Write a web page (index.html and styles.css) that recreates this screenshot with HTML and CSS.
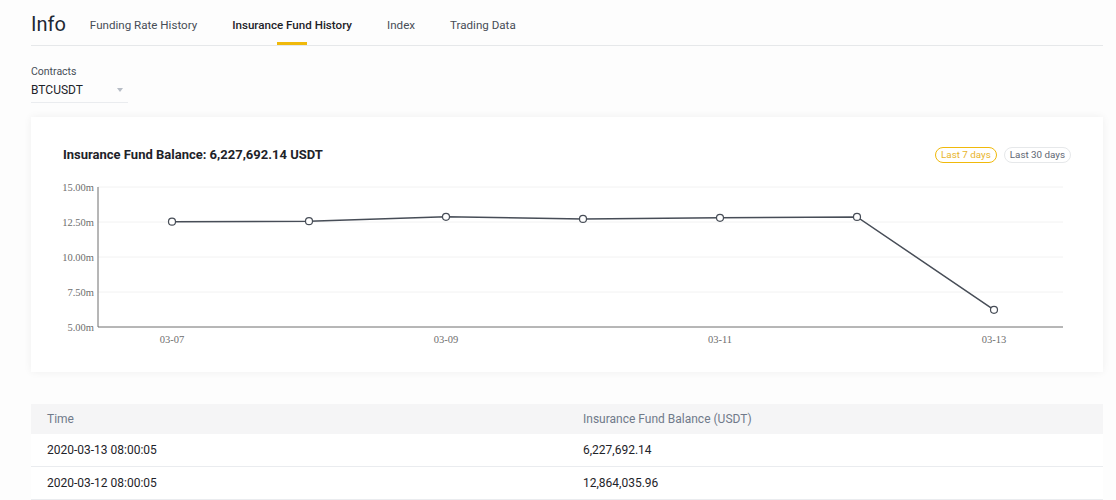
FILE: index.html
```html
<!DOCTYPE html>
<html lang="en">
<head>
    <meta charset="UTF-8">
    <title>Info - Insurance Fund History</title>
    <link rel="stylesheet" href="styles.css">
</head>
<body>
    <div class="page">
        <div class="header">
            <h1 class="title">Info</h1>
            <div class="tabs">
                <a class="tab">Funding Rate History</a>
                <a class="tab active">Insurance Fund History</a>
                <a class="tab">Index</a>
                <a class="tab">Trading Data</a>
            </div>
        </div>

        <div class="contracts">
            <div class="contracts-label">Contracts</div>
            <div class="select">
                <span>BTCUSDT</span>
                <span class="caret"></span>
            </div>
        </div>

        <div class="card">
            <div class="card-head">
                <div class="card-title">Insurance Fund Balance: 6,227,692.14 USDT</div>
                <div class="ranges">
                    <button class="range active">Last 7 days</button>
                    <button class="range">Last 30 days</button>
                </div>
            </div>
            <svg id="chart" class="chart" width="1072" height="172" viewBox="0 0 1072 172"></svg>
        </div>

        <div class="table">
            <div class="row head">
                <div class="cell">Time</div>
                <div class="cell">Insurance Fund Balance (USDT)</div>
            </div>
            <div class="row">
                <div class="cell">2020-03-13 08:00:05</div>
                <div class="cell">6,227,692.14</div>
            </div>
            <div class="row">
                <div class="cell">2020-03-12 08:00:05</div>
                <div class="cell">12,864,035.96</div>
            </div>
        </div>
    </div>

    <script>
        const data = [
            { label: '03-07', value: 12.52 },
            { label: '03-08', value: 12.56 },
            { label: '03-09', value: 12.87 },
            { label: '03-10', value: 12.72 },
            { label: '03-11', value: 12.80 },
            { label: '03-12', value: 12.864 },
            { label: '03-13', value: 6.2277 }
        ];

        const svg = document.getElementById('chart');
        const ns = 'http://www.w3.org/2000/svg';
        const plot = { left: 67, right: 1032, top: 9, bottom: 149 };
        const min = 5, max = 15;

        function el(name, attrs, text) {
            const node = document.createElementNS(ns, name);
            for (const k in attrs) node.setAttribute(k, attrs[k]);
            if (text) node.textContent = text;
            svg.appendChild(node);
            return node;
        }

        function yOf(v) {
            return plot.bottom - (v - min) / (max - min) * (plot.bottom - plot.top);
        }

        // grid + y labels
        for (let v = min; v <= max; v += 2.5) {
            const y = yOf(v);
            if (v > min) el('line', { x1: plot.left, x2: plot.right, y1: y, y2: y, class: 'grid' });
            el('text', { x: 63, y: y + 4, class: 'axis-label', 'text-anchor': 'end' }, v.toFixed(2) + 'm');
        }

        el('line', { x1: plot.left, x2: plot.left, y1: plot.top, y2: plot.bottom, class: 'axis' });
        el('line', { x1: plot.left, x2: plot.right, y1: plot.bottom, y2: plot.bottom, class: 'axis' });

        const pts = data.map((d, i) => [141 + i * 137, yOf(d.value)]);
        el('polyline', { points: pts.map(p => p.join(',')).join(' '), class: 'line' });

        pts.forEach((p, i) => {
            el('circle', { cx: p[0], cy: p[1], r: 3.5, class: 'dot' });
            if (i % 2 === 0) {
                el('text', { x: p[0], y: 165, class: 'axis-label', 'text-anchor': 'middle' }, data[i].label);
            }
        });
    </script>
</body>
</html>
```

FILE: styles.css
```css
body {
    margin: 0;
    background-color: #fdfdfd;
    font-family: Roboto, "Liberation Sans", sans-serif;
    color: #1e2329;
}
.page {
    width: 1072px;
    padding-left: 31px;
}
.header {
    display: flex;
    align-items: center;
    height: 45px;
    border-bottom: 1px solid #e6e8ea;
    gap: 24px;
}
.title {
    margin: 0;
    font-size: 20px;
    font-weight: 400;
    color: #212833;
    line-height: 45px;
    padding-top: 3px;
}
.tabs {
    display: flex;
    gap: 35px;
    height: 100%;
}
.tab {
    position: relative;
    display: flex;
    align-items: center;
    font-size: 11.6px;
    color: #474d57;
    cursor: pointer;
    padding-top: 4px;
}
.tab.active {
    font-weight: 500;
    color: #1e2329;
}
.tab.active::after {
    content: "";
    position: absolute;
    left: 50%;
    bottom: 0;
    width: 30px;
    height: 3px;
    margin-left: -15px;
    background-color: #f0b90b;
}
.contracts {
    padding-top: 19px;
}
.contracts-label {
    font-size: 10.5px;
    color: #474d57;
    line-height: 14px;
}
.select {
    display: flex;
    align-items: center;
    justify-content: space-between;
    width: 97px;
    height: 22px;
    border-bottom: 1px solid #eaecef;
    font-size: 12px;
    color: #1e2329;
    padding-bottom: 1px;
}
.caret {
    width: 0;
    height: 0;
    margin-right: 5px;
    border-left: 3px solid transparent;
    border-right: 3px solid transparent;
    border-top: 4px solid #b7bdc6;
}
.card {
    margin-top: 14px;
    background-color: #fff;
    box-shadow: 0 0 8px rgba(0, 0, 0, 0.06);
    padding: 27px 0 22px;
}
.card-head {
    display: flex;
    align-items: center;
    justify-content: space-between;
    height: 20px;
    padding: 0 32px;
}
.card-title {
    font-size: 13px;
    font-weight: 700;
    color: #1e2329;
}
.ranges {
    display: flex;
    gap: 7px;
    padding-top: 2px;
}
.range {
    height: 16px;
    padding: 0 5px;
    border: 1px solid #e6e8ea;
    border-radius: 8px;
    background: #fff;
    font-family: Roboto, "Liberation Sans", sans-serif;
    font-size: 9.8px;
    color: #5e6673;
    line-height: 14px;
    cursor: pointer;
}
.range.active {
    border-color: #f0b90b;
    color: #e8b42a;
}
.chart {
    display: block;
    margin-top: 14px;
}
.grid {
    stroke: #f2f2f2;
    stroke-width: 1;
}
.axis {
    stroke: #6f6f6f;
    stroke-width: 1;
}
.axis-label {
    font-family: "Liberation Serif", serif;
    font-size: 10.5px;
    fill: #6e6e6e;
}
.line {
    fill: none;
    stroke: #474d57;
    stroke-width: 1.5;
}
.dot {
    fill: #fff;
    stroke: #474d57;
    stroke-width: 1.2;
}
.table {
    margin-top: 32px;
}
.row {
    display: grid;
    grid-template-columns: 536px 1fr;
    height: 32px;
    align-items: center;
    border-bottom: 1px solid #eaecef;
    background-color: #fff;
    font-size: 12px;
    color: #1e2329;
}
.row.head {
    height: 30px;
    border-bottom: none;
    background-color: #f5f5f6;
    color: #707a8a;
}
.cell {
    padding-left: 16px;
}
```
